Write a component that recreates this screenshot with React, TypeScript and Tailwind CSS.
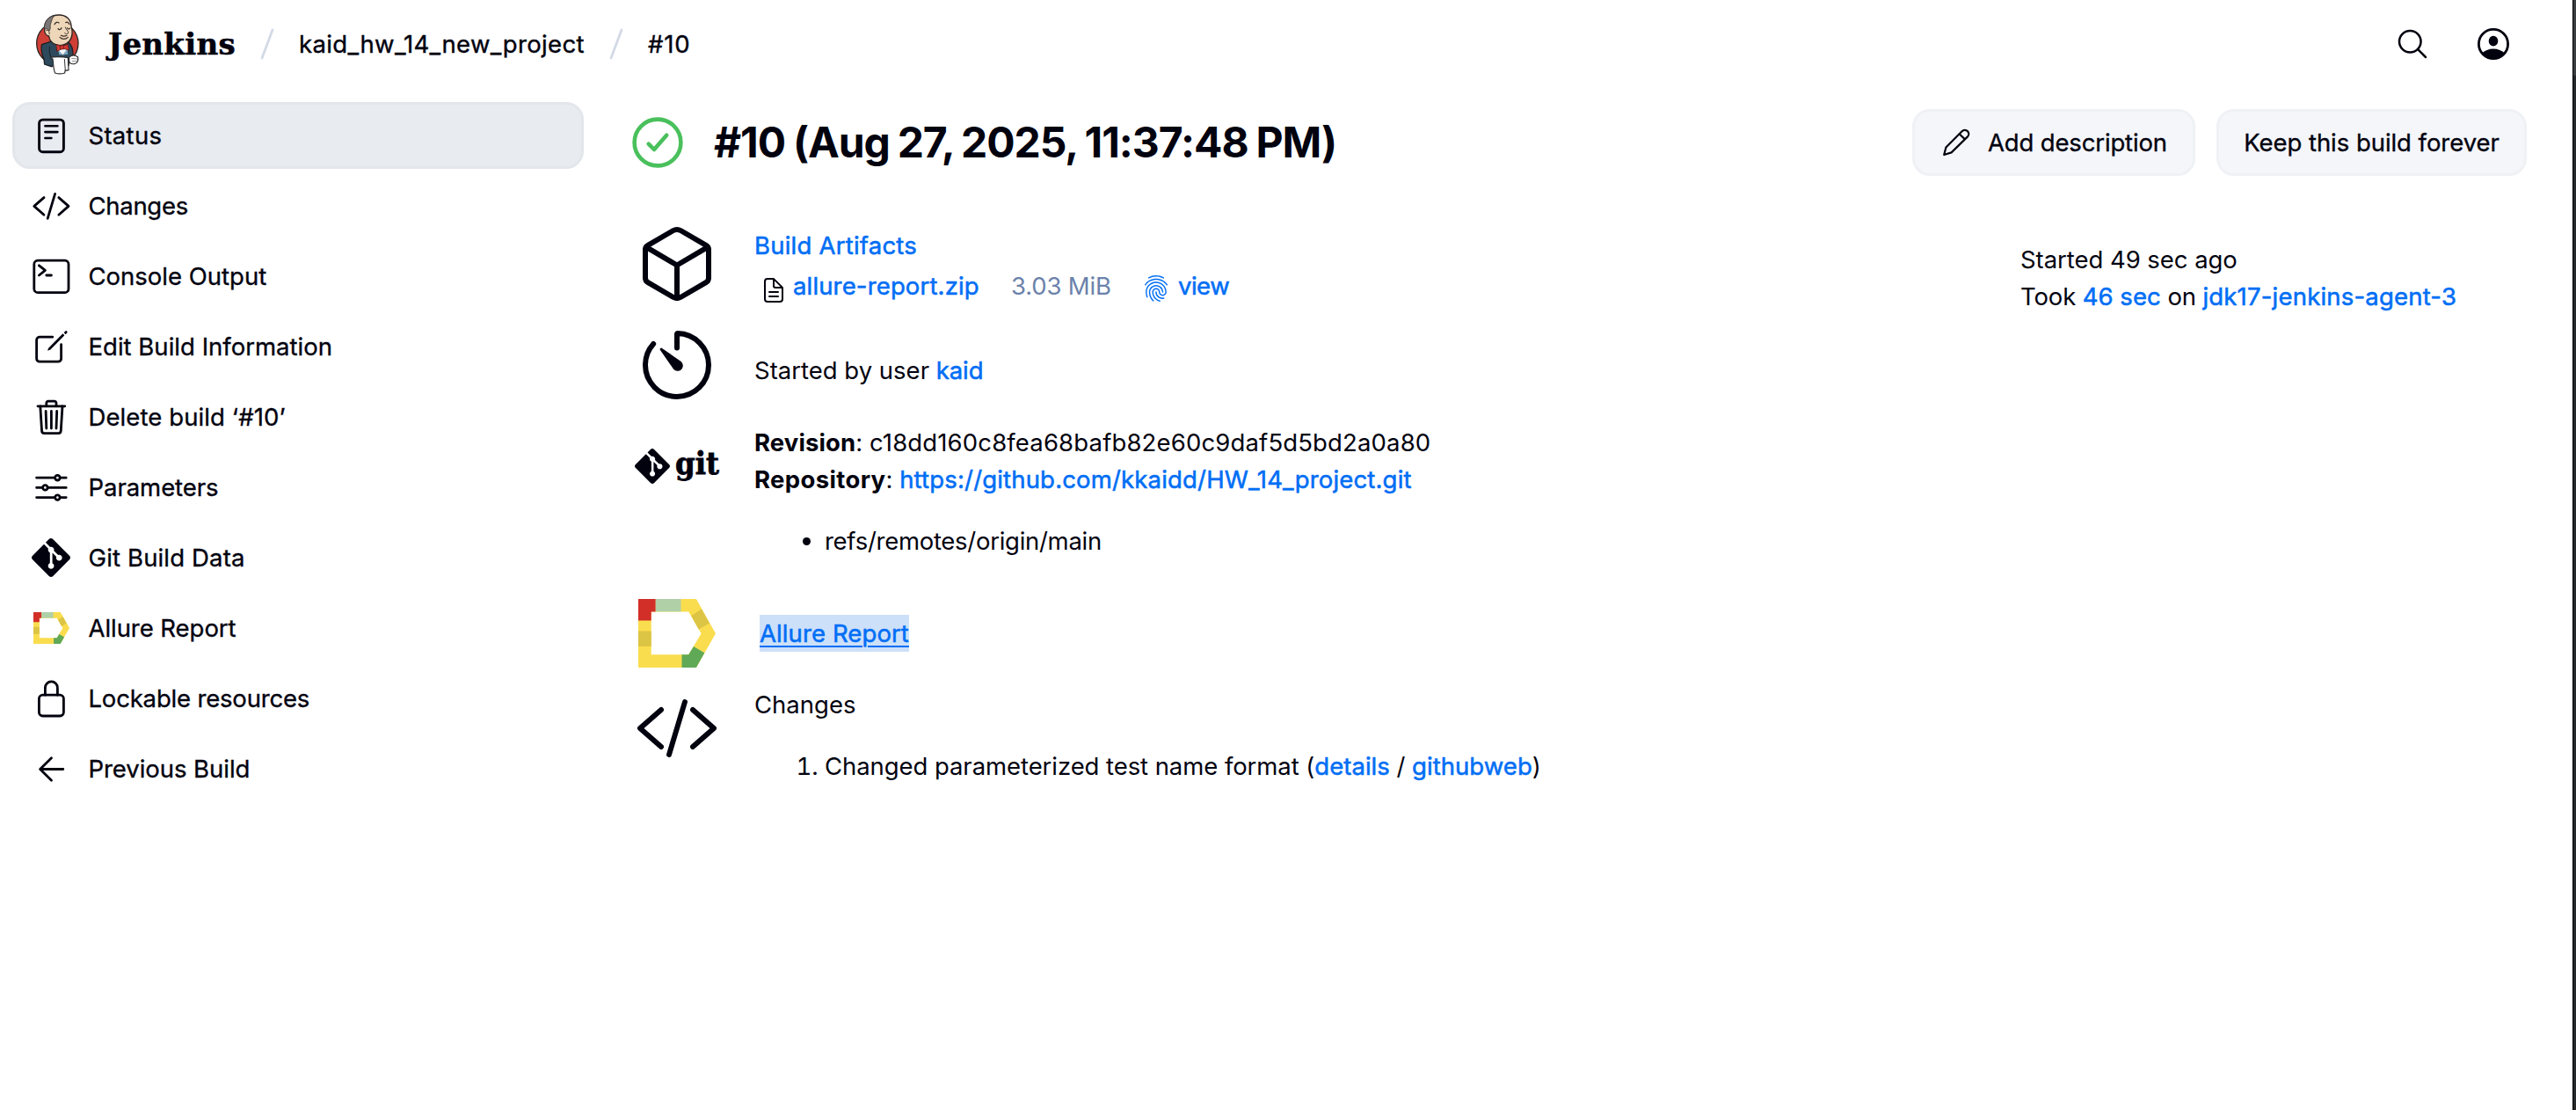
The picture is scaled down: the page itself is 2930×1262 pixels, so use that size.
import type { ReactNode } from "react";
import {
  IoCodeSlashOutline,
  IoCreateOutline,
  IoCubeOutline,
  IoDocumentTextOutline,
  IoFingerPrintOutline,
  IoLockClosedOutline,
  IoOptionsOutline,
  IoSearchOutline,
  IoTerminalOutline,
  IoTimerOutline,
  IoTrashOutline,
} from "react-icons/io5";
import { SiGit } from "react-icons/si";

function JenkinsLogo({ className }: { className: string }) {
  return (
    <svg viewBox="120 44 156 212" className={`shrink-0 ${className}`} aria-label="Jenkins">
      <ellipse cx="196" cy="147" rx="71" ry="72" fill="#cf3f36" stroke="#2d2523" strokeWidth="4" />
      <path d="M142 152 C148 146 160 148 172 140 L232 142 C246 152 250 170 249 190 L236 198 L234 222 L182 222 L176 226 L152 218 L150 200 C142 184 140 166 142 152Z" fill="#2d4a5c" stroke="#1b1f24" strokeWidth="4" />
      <path d="M190 154 L232 154 L230 178 L216 188 L202 180Z" fill="#f4f6f8" stroke="#263238" strokeWidth="2" />
      <path d="M198 168 L214 186 L228 168 L232 184 L202 186Z" fill="#7fa5c0" />
      <path d="M152 98 C150 68 172 50 202 50 C226 50 242 66 243 88 C250 112 246 128 236 140 C226 152 204 158 188 150 C174 144 168 132 167 122 C158 122 150 110 152 98Z" fill="#eed6b8" stroke="#2d2523" strokeWidth="4" />
      <path d="M152 100 C148 78 162 56 186 52 C176 62 176 72 172 82 C170 90 174 98 168 104 C162 96 156 96 152 100Z" fill="#7b7676" stroke="#3a3433" strokeWidth="2.5" />
      <path d="M157 104 C164 98 170 106 168 116" fill="none" stroke="#3a3030" strokeWidth="3" />
      <path d="M186 82 C190 74 196 73 201 77 M224 76 C230 72 234 76 237 82 M198 97 C202 102 207 100 210 94 M230 94 C232 99 236 99 239 95" fill="none" stroke="#2d2523" strokeWidth="3.5" strokeLinecap="round" />
      <path d="M223 92 C226 102 236 106 232 113 C228 116 224 115 221 112" fill="none" stroke="#3a2d28" strokeWidth="3" strokeLinecap="round" />
      <path d="M204 126 C212 134 224 134 232 126 M208 120 C216 124 224 122 228 120" fill="none" stroke="#3a2d28" strokeWidth="3.5" strokeLinecap="round" />
      <path d="M192 150 L210 157 L232 150 L235 170 L214 164 L194 174Z" fill="#d23a32" stroke="#5d1715" strokeWidth="2.5" />
      <path d="M206 154 L217 154 L217 167 L206 167Z" fill="#d23a32" stroke="#5d1715" strokeWidth="2" />
      <path d="M170 158 C166 176 172 196 182 204" fill="none" stroke="#1b1f24" strokeWidth="3" />
      <path d="M236 194 C244 186 258 186 266 194 C268 204 264 216 254 217 C246 218 238 216 236 208Z" fill="#fff" stroke="#2b2b2b" strokeWidth="3.5" />
      <path d="M244 198 L264 200 M246 207 L262 208" stroke="#555" strokeWidth="2" />
      <path d="M172 196 C180 192 214 192 232 196 L234 238 L222 240 L221 248 C208 252 196 251 188 248 C182 236 182 214 180 200Z" fill="#fff" stroke="#2b2b2b" strokeWidth="3.5" />
      <path d="M220 200 L223 240" stroke="#333" strokeWidth="3" />
    </svg>
  );
}

function AllureLogo({ className }: { className: string }) {
  return (
    <svg viewBox="77 64 263 233" className={className} preserveAspectRatio="none">
      <path fillRule="evenodd" d="M77 64H274L340 181L274 297H77Z M121 107V253H248L291 181L248 107Z" fill="#fadd4e" />
      <path d="M77 64H136V107H121V137H77Z" fill="#d22f28" />
      <path d="M136 64H222V107H136Z" fill="#b0d0a8" />
      <path d="M77 173H121V225H77Z" fill="#dcc444" />
      <path d="M257 121L292 98L319 147L282 167Z" fill="#dcc444" />
      <path d="M225 253H248L265 225L302 247L274 297H225Z" fill="#5fa957" />
    </svg>
  );
}

function StatusIcon() {
  return (
    <svg viewBox="0 0 45 45" className="size-[45px]" fill="none" stroke="currentColor" strokeWidth="2.6" strokeLinecap="round">
      <rect x="8.6" y="4.1" width="27.8" height="36.6" rx="4" strokeWidth="2.9" />
      <path d="M15.4 11.3H29.4M15.4 18.1H29.4M15.4 25H22.4" />
    </svg>
  );
}

function ArrowIcon() {
  return (
    <svg viewBox="0 0 45 45" className="size-[45px]" fill="none" stroke="currentColor" strokeWidth="2.8" strokeLinecap="round" strokeLinejoin="round">
      <path d="M22.5 9.8L9.6 22.5L22.5 35.3M10.4 22.5H35.8" />
    </svg>
  );
}

function PencilIcon() {
  return (
    <svg viewBox="0 0 32 32" className="size-8" fill="none" stroke="currentColor" strokeWidth="2.2" strokeLinejoin="round">
      <path d="M2.2 30 L4.4 21.6 L22.6 3.2 A4.4 4.4 0 0 1 29 9.4 L10.6 27.4 Z" />
      <path d="M19.6 6.2 L26 12.4" />
    </svg>
  );
}

function UserIcon() {
  return (
    <svg viewBox="0 0 36 36" className="size-9">
      <clipPath id="user-circle">
        <circle cx="18" cy="18" r="17" />
      </clipPath>
      <circle cx="18" cy="18" r="16.6" fill="none" stroke="currentColor" strokeWidth="2.8" />
      <ellipse cx="18" cy="14.7" rx="5.3" ry="5.9" fill="currentColor" />
      <path clipPath="url(#user-circle)" d="M4 29.5C8 25.5 13 23.6 18 23.6S28 25.5 32 29.5V36H4Z" fill="currentColor" />
    </svg>
  );
}

function Slash() {
  return (
    <svg viewBox="0 0 16 36" className="h-9 w-4 shrink-0">
      <path d="M2 34L14 2" stroke="#d3d9e6" strokeWidth="2.8" strokeLinecap="round" />
    </svg>
  );
}

function Link({ children, className = "tracking-[0.15px]" }: { children: ReactNode; className?: string }) {
  return (
    <a href="#" className={`text-[#006ef5] [-webkit-text-stroke:0.55px_#006ef5] ${className}`}>
      {children}
    </a>
  );
}

const tasks: { icon: ReactNode; label: string; tracking: string }[] = [
  { icon: <StatusIcon />, label: "Status", tracking: "tracking-[0.3px]" },
  { icon: <IoCodeSlashOutline />, label: "Changes", tracking: "tracking-[-0.3px]" },
  { icon: <IoTerminalOutline />, label: "Console Output", tracking: "tracking-[0px]" },
  { icon: <IoCreateOutline />, label: "Edit Build Information", tracking: "tracking-[0.02px]" },
  { icon: <IoTrashOutline />, label: "Delete build ‘#10’", tracking: "tracking-[0.1px]" },
  { icon: <IoOptionsOutline />, label: "Parameters", tracking: "tracking-[-0.05px]" },
  { icon: <SiGit className="size-11" />, label: "Git Build Data", tracking: "tracking-[0.15px]" },
  { icon: <AllureLogo className="h-9 w-[41px]" />, label: "Allure Report", tracking: "tracking-[-0.05px]" },
  { icon: <IoLockClosedOutline />, label: "Lockable resources", tracking: "tracking-[-0.18px]" },
  { icon: <ArrowIcon />, label: "Previous Build", tracking: "tracking-[-0.05px]" },
];

function Row({ icon, className, children }: { icon: ReactNode; className: string; children: ReactNode }) {
  return (
    <div className={`flex ${className}`}>
      <div className="flex w-[138px] shrink-0 justify-center self-start pr-[38px]">{icon}</div>
      <div className="min-w-0">{children}</div>
    </div>
  );
}

export default function App() {
  return (
    <div className="flex h-[1262px] w-[2930px] overflow-hidden bg-white font-['Inter','Liberation_Sans',sans-serif] text-[27.5px] leading-[42px] text-[#02020f]">
      <div className="flex min-w-0 flex-1 flex-col">
        <header className="flex h-[100px] shrink-0 items-center pl-10 [-webkit-text-stroke:0.4px_#02020f]">
          <JenkinsLogo className="h-[70.7px] w-[52px]" />
          <span className="ml-[31px] w-[147px] font-['DejaVu_Serif',serif] text-[34px] font-bold tracking-[0.3px] [-webkit-text-stroke:0.6px_#02020f]">Jenkins</span>
          <span className="ml-[26px] flex">
            <Slash />
          </span>
          <span className="ml-7 w-[325px] whitespace-nowrap tracking-[0.38px]">kaid_hw_14_new_project</span>
          <span className="ml-7 flex">
            <Slash />
          </span>
          <span className="ml-7 tracking-[0.8px]">#10</span>
          <div className="ml-auto flex items-center gap-[54px] pr-[72px]">
            <IoSearchOutline className="size-10" />
            <UserIcon />
          </div>
        </header>

        <div className="flex flex-1">
          <nav className="ml-3.5 flex w-[650px] shrink-0 flex-col gap-1 pt-4">
            {tasks.map((t, i) => (
              <a
                key={t.label}
                href="#"
                className={`flex h-19 items-center rounded-[20px] border-[3px] pl-[17px] [-webkit-text-stroke:0.35px_#02020f] ${
                  i === 0 ? "border-[#e3e7ec] bg-[#e8ebf0]" : "border-transparent"
                }`}
              >
                <span className="flex w-12 items-center justify-center text-[44.8px] [&>svg]:shrink-0">{t.icon}</span>
                <span className={`ml-[18.5px] whitespace-nowrap ${t.tracking}`}>{t.label}</span>
              </a>
            ))}
          </nav>

          <main className="ml-14 flex min-w-0 flex-1 flex-col pr-[52px]">
            <div className="flex h-[124px] items-center">
              <svg viewBox="0 0 58 58" className="-ml-px size-[58px] shrink-0" fill="none" stroke="#4ac05c" strokeWidth="4.6" strokeLinecap="round" strokeLinejoin="round">
                <circle cx="29" cy="29" r="26.4" />
                <path d="M18.7 30.6L25 37L39.2 20.8" />
              </svg>
              <h1 className="ml-[35px] whitespace-nowrap text-[48px] leading-[60px] font-bold tracking-[-1.05px] [word-spacing:-1.5px]">
                #10 (Aug 27, 2025, 11:37:48 PM)
              </h1>
              <div className="ml-auto flex gap-6 [-webkit-text-stroke:0.35px_#02020f]">
                <button className="flex h-19 w-[322px] items-center rounded-[20px] border-[3px] border-[#eff1f5] bg-[#f5f6fa] pl-[31px] whitespace-nowrap">
                  <PencilIcon />
                  <span className="ml-5 tracking-[-0.15px]">Add description</span>
                </button>
                <button className="h-19 w-[353px] rounded-[20px] border-[3px] border-[#eff1f5] bg-[#f5f6fa] text-center whitespace-nowrap tracking-[-0.05px]">
                  Keep this build forever
                </button>
              </div>
            </div>

            <div className="flex justify-between">
              <div className="flex flex-col pt-[26px]">
                <Row className="h-[114px]" icon={<IoCubeOutline className="mt-0.5 size-24" />}>
                  <div className="pt-2">
                    <Link className="tracking-[0.22px]">Build Artifacts</Link>
                  </div>
                  <div className="mt-1 flex whitespace-nowrap">
                    <IoDocumentTextOutline className="mt-2.5 ml-[6px] size-8" />
                    <Link className="ml-[6px] w-[212px] tracking-[0.15px]">allure-report.zip</Link>
                    <span className="ml-9 w-[115px] tracking-[-0.17px] text-[#6b82ab]">3.03 MiB</span>
                    <Link className="ml-[34px] flex">
                      <IoFingerPrintOutline className="mt-2 size-8" />
                      <span className="ml-[9px] tracking-[-0.5px]">view</span>
                    </Link>
                  </div>
                </Row>
                <Row className="h-[112px]" icon={<IoTimerOutline className="mt-[3px] size-24" />}>
                  <div className="pt-9">
                    Started by user <Link className="tracking-[-0.1px]">kaid</Link>
                  </div>
                </Row>
                <Row
                  className="h-[192px]"
                  icon={
                    <span className="mt-[34px] flex h-10 items-center">
                      <SiGit className="size-10" />
                      <span className="-mt-2 ml-[6px] font-['DejaVu_Serif_Condensed','DejaVu_Serif',serif] text-[36px] font-bold [-webkit-text-stroke:0.8px_#02020f]">git</span>
                    </span>
                  }
                >
                  <div className="pt-1.5 whitespace-nowrap">
                    <b className="tracking-[0.1px]">Revision</b>: <span className="tracking-[0.15px]">c18dd160c8fea68bafb82e60c9daf5d5bd2a0a80</span>
                  </div>
                  <div className="whitespace-nowrap">
                    <b className="tracking-[0.35px]">Repository</b>: <Link className="tracking-[0.17px]">https://github.com/kkaidd/HW_14_project.git</Link>
                  </div>
                  <ul className="mt-7 list-disc pl-20 tracking-[-0.28px]">
                    <li>refs/remotes/origin/main</li>
                  </ul>
                </Row>
                <Row className="h-[106px]" icon={<AllureLogo className="mt-[13px] h-[78px] w-[88px]" />}>
                  <div className="pt-[31px] pl-1.5">
                    <Link className="block h-[42px] w-[170px] bg-[#cde0f9] whitespace-nowrap tracking-[0.1px] underline decoration-2 underline-offset-[4px]">
                      Allure Report
                    </Link>
                  </div>
                </Row>
                <Row className="h-[140px]" icon={<IoCodeSlashOutline className="mt-[6px] size-24" />}>
                  <div className="pt-1.5">Changes</div>
                  <ol className="mt-7 list-decimal pl-20 whitespace-nowrap tracking-[-0.07px]">
                    <li>
                      Changed parameterized test name format (<Link className="tracking-[0.05px]">details</Link> / <Link className="tracking-[0.05px]">githubweb</Link>)
                    </li>
                  </ol>
                </Row>
              </div>

              <div className="w-[576px] pt-[50px] whitespace-nowrap tracking-[-0.05px]">
                <div>Started 49 sec ago</div>
                <div className="tracking-[-0.15px]">
                  Took <Link className="tracking-[0.05px]">46 sec</Link> on <Link className="tracking-[0.2px]">jdk17-jenkins-agent-3</Link>
                </div>
              </div>
            </div>
          </main>
        </div>
      </div>
      <div className="flex w-1 flex-col border-l border-black bg-[#26282a]">
        <div className="h-[86px] bg-[#3c3f41]" />
      </div>
    </div>
  );
}
